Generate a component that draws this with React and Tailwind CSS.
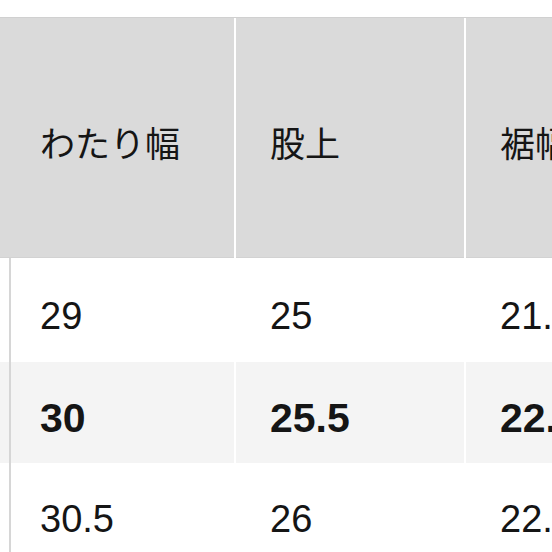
const rows = [
  { values: ["29", "25", "21.5"], bold: false, bg: "bg-white", pt: "pt-[39px]", h: "h-[104px]" },
  { values: ["30", "25.5", "22.5"], bold: true, bg: "bg-[#f4f4f4]", pt: "pt-[36px]", h: "h-[101px]" },
  { values: ["30.5", "26", "22.5"], bold: false, bg: "bg-white", pt: "pt-[37px]", h: "h-[104px]" },
];

function HeaderRow() {
  return (
    <div className="flex h-[241px] gap-[2px] border-t border-[#d0d0d0] bg-white">
      <div className="w-[234px] shrink-0 bg-[#dadada] pl-[40px] pt-[109px] border-b border-[#d2d2d2]">
        <span className="text-[35px] leading-none">わたり幅</span>
      </div>
      <div className="w-[228px] shrink-0 bg-[#dadada] pl-[34px] pt-[109px] border-b border-[#d2d2d2]">
        <span className="text-[35px] leading-none">股上</span>
      </div>
      <div className="flex-1 bg-[#dadada] pl-[34px] pt-[109px] whitespace-nowrap overflow-hidden border-b border-[#d2d2d2]">
        <span className="text-[35px] leading-none">裾幅</span>
      </div>
    </div>
  );
}

function BodyRow({ row }) {
  const text = row.bold ? "text-[41px] font-bold" : "text-[38px] font-normal";
  return (
    <div className={`flex ${row.h} ${row.bg}`}>
      <div className="w-[9px] shrink-0" />
      <div className="w-[2px] shrink-0 bg-[#d6d6d6]" />
      <div className={`w-[223px] shrink-0 pl-[29px] ${row.pt}`}>
        <div className={`leading-none ${text}`}>{row.values[0]}</div>
      </div>
      <div className="w-[2px] shrink-0 bg-white" />
      <div className={`w-[228px] shrink-0 pl-[34px] ${row.pt}`}>
        <div className={`leading-none ${text}`}>{row.values[1]}</div>
      </div>
      <div className="w-[2px] shrink-0 bg-white" />
      <div className={`flex-1 pl-[34px] whitespace-nowrap overflow-hidden ${row.pt}`}>
        <div className={`leading-none ${text}`}>{row.values[2]}</div>
      </div>
    </div>
  );
}

export default function App() {
  return (
    <div
      className="w-[552px] h-[552px] overflow-hidden bg-white text-[#151515] pt-[17px]"
      style={{ fontFamily: "'Liberation Sans', 'Noto Sans CJK JP', sans-serif" }}
    >
      <HeaderRow />
      {rows.map((row, i) => (
        <BodyRow key={i} row={row} />
      ))}
    </div>
  );
}
